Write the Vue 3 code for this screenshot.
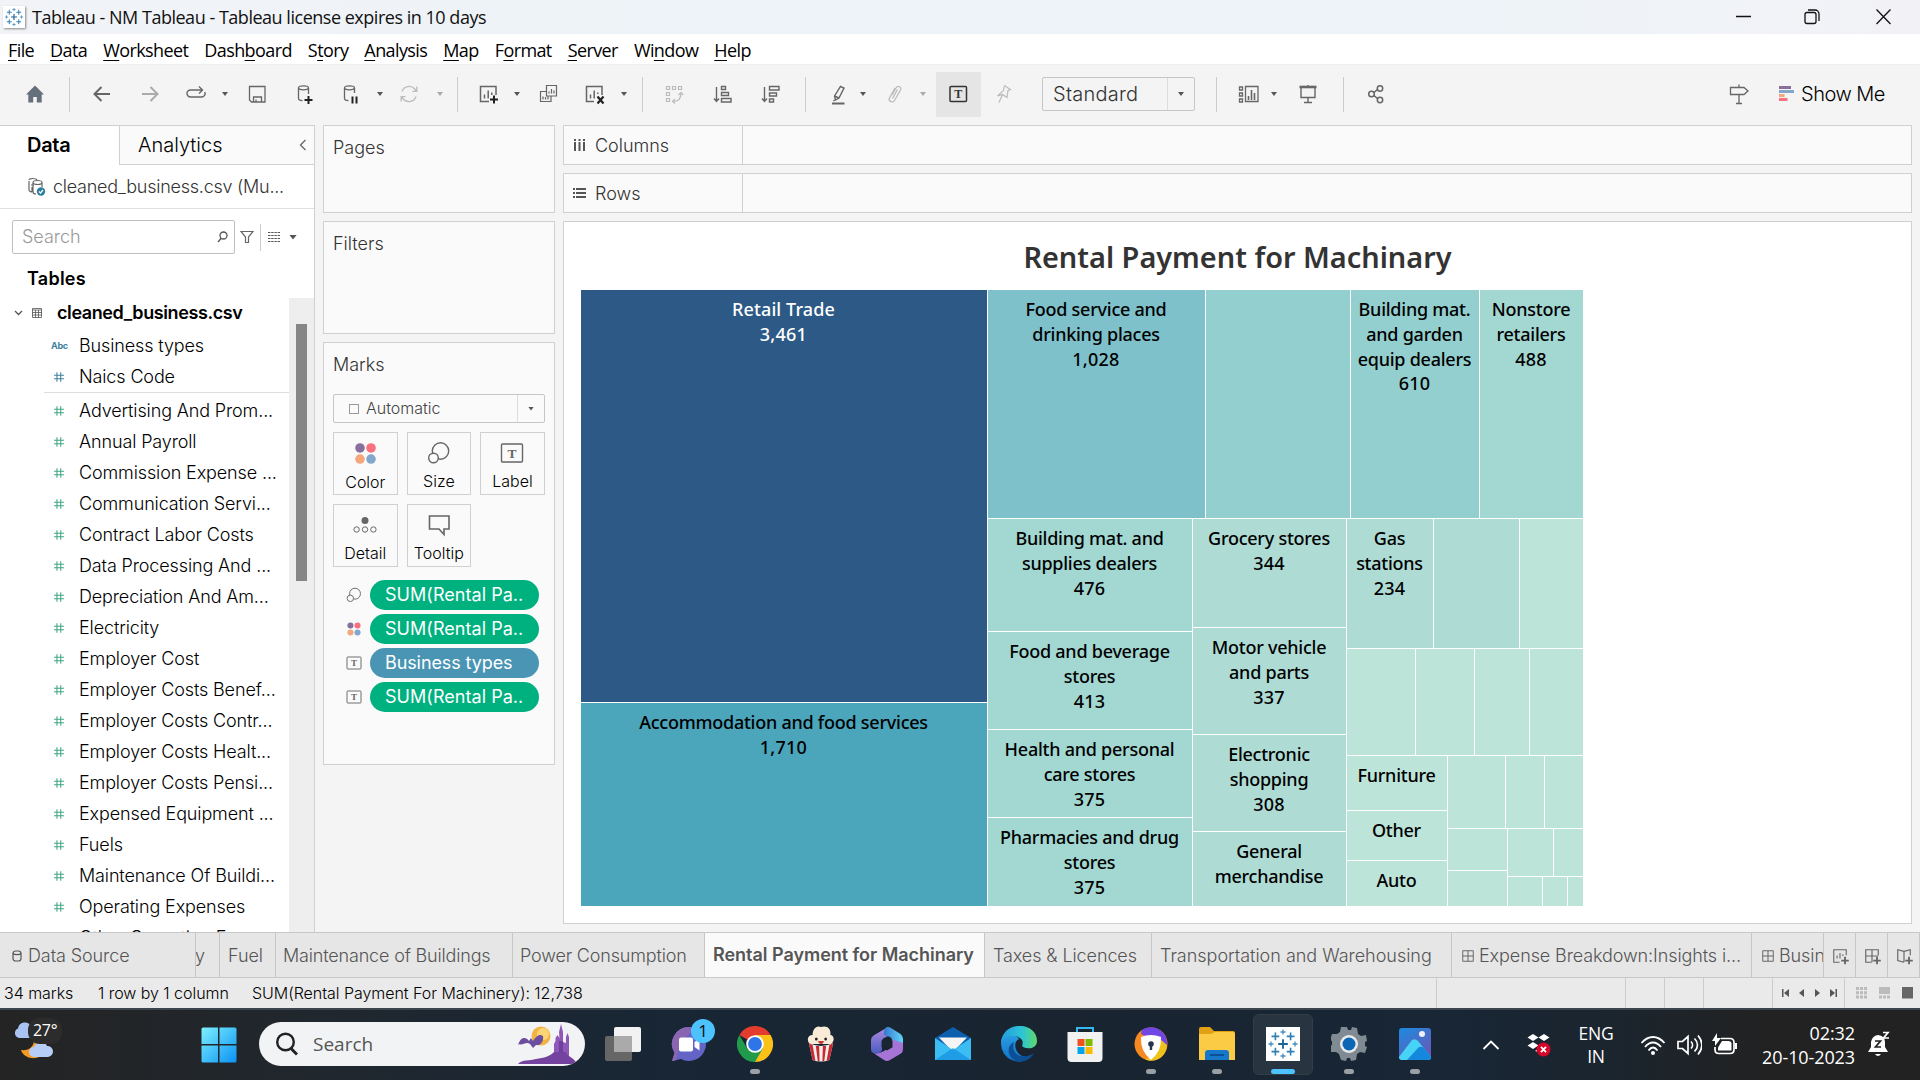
<script setup>
import { h } from 'vue'

/* ---------- icon drawings (stroke icons share a 24px box) ---------- */
const T = (x, y, s, c = '#555') => `<text x="${x}" y="${y}" font-family="Liberation Serif, serif" font-weight="700" font-size="${s}" fill="${c}" stroke="none" text-anchor="middle">T</text>`
const cross = (x, y, r, c, w) => `<path d="M${x - r} ${y}h${2 * r}M${x} ${y - r}v${2 * r}" stroke="${c}" stroke-width="${w}"/>`
const tableau = [
  cross(12, 12, 3.6, '#1f6391', 1.4),
  ...[[6.3, 6.3], [17.7, 6.3], [6.3, 17.7], [17.7, 17.7]].map(([x, y]) => cross(x, y, 2.9, '#2f7fb5', 1.2)),
  ...[[12, 3], [12, 21], [3, 12], [21, 12]].map(([x, y]) => cross(x, y, 1.9, '#4a90bd', 1)),
].join('')
const dots = '<g><circle cx="6.7" cy="6.7" r="4.6" fill="#87719c"/><circle cx="17.3" cy="6.7" r="4.6" fill="#f9717f"/><circle cx="6.7" cy="17.3" r="4.6" fill="#f4a77d"/><circle cx="17.3" cy="17.3" r="4.6" fill="#83a6cc"/></g>'
const icons = {
  tableau,
  dots,
  home: '<path d="M12 3.5 3 12.5h2.3V20.500h4.900v-5.500h3.600v5.500h4.900V12.500H21Z" fill="#66707c" stroke="none"/>',
  back: '<path d="M20 12H5M11.500 5 4.500 12l7 7" stroke-width="2"/>',
  forward: '<path d="M4 12h15M12.500 5l7 7-7 7" stroke="#aaa" stroke-width="2"/>',
  redo: '<path d="M18 8H6.500a3.500 3.500 0 0 0-3.500 3.500a3.500 3.500 0 0 0 3.500 3.500h11a3.500 3.500 0 0 0 3.300-5M15 4.500 18.500 8l-3.500 3.500" stroke-width="1.400"/>',
  save: '<path d="M4.500 4.500h15.500v15.500H6.500l-2-2ZM8.500 20v-5h8v5M11 20v-2.500" stroke-width="1.300"/>',
  dbadd: `<path d="M6.500 6v10.500c0 1 1.500 2 4 2.200M16.500 6v6" stroke-width="1.300"/><ellipse cx="11.500" cy="5.800" rx="5" ry="2" stroke-width="1.300"/><path d="M16.500 14v8M12.500 18h8" stroke="#222" stroke-width="2"/>`,
  dbpause: '<path d="M6.500 6v10.500c0 1 1.500 2 4 2.200M16.500 6v5" stroke-width="1.300"/><ellipse cx="11.500" cy="5.800" rx="5" ry="2" stroke-width="1.300"/><path d="M14.500 14.500v7M18.500 14.500v7" stroke="#222" stroke-width="2"/>',
  refresh: '<path d="M5 9.500A7.500 7.500 0 0 1 17.500 6.700L19.500 9M19 14.500A7.500 7.500 0 0 1 6.500 17.300L4.500 15M19.800 4.500V9.300H15.500M4.200 19.500v-4.800h4.300" stroke="#bbb" stroke-width="1.300"/>',
  chartadd: `<path d="M13 19.500H4.500v-15H20V13M8.500 16.500v-4M12.200 16.500V8.500M15.800 13V10.500" stroke-width="1.500"/><path d="M18 13.500v8M14 17.500h8" stroke="#222" stroke-width="2"/>`,
  duplicate: '<path d="M10.500 3.500h10v10.500h-10ZM10.500 9.500h-6v10h10.500v-5.500M13 11.500v-2M15.500 11.500V7M18 11.500V8.500M7 17.500v-3M9.500 17.500v-2.500M12 17.500v-3" stroke-width="1.200"/>',
  chartclear: '<path d="M12 19.500H4.500v-15H20V13M8.500 16.500v-4M12.200 16.500V8.500M15.800 12V10.500" stroke-width="1.500"/><path d="M15.500 14.500l6 7M21.500 14.500l-6 7" stroke="#222" stroke-width="2.200"/>',
  swap: '<g stroke="#bbb" stroke-width="1.200"><path d="M4.500 4.500h3v3h-3ZM10.500 4.500h3v3h-3ZM16.500 4.500h3v3h-3ZM4.500 10.500h3v3h-3ZM4.500 16.500h3v3h-3ZM11 19.500c5 0 8-3 8-8.500M16.500 13 19 10.500l2.300 2.500M13 17l-2.500 2.500L13 21.500"/></g>',
  sortasc: '<path d="M6.500 5v14M4 16.500l2.500 3 2.500-3M11.500 4.500h4v3h-4ZM11.500 10.500h7v3h-7ZM11.500 16.500h9.500v3.500h-9.500Z" stroke-width="1.400"/>',
  sortdesc: '<path d="M6.500 5v14M4 16.500l2.500 3 2.500-3M11.500 4.500h9.500v3.500h-9.500ZM11.500 11h7v3h-7ZM11.500 17h4v3h-4Z" stroke-width="1.400"/>',
  pen: '<path d="M14.500 4.500l3.500 1.500-5 10-3.500 2-1-4ZM8.500 14l4.500 2M8.500 18l-1 1" stroke-width="1.400"/><path d="M6 21.500h12.500" stroke-width="2"/>',
  clip: '<path d="M9 13l4-7c2-3 6-1 4.500 2l-6 10.500c-2 3-6.500.5-5-2.500L12 6M9.500 16.500l5-9" stroke="#bbb" stroke-width="1.300"/>',
  label: '<rect x="4" y="4.500" width="16.500" height="15" rx="1" stroke="#333" stroke-width="1.500"/>' + T(12.2, 16, 12, '#333'),
  pin: '<path d="M13.500 3.500l6 4-2.500 1-1 7-4.500-3-5 1.500M11.500 12.500 8 20.500M13.500 3.500l-1 5-6 5.500" stroke="#bbb" stroke-width="1.200"/>',
  cards: '<path d="M3.500 5h3v3h-3ZM3.500 11h3v3h-3ZM3.500 17h3v3h-3ZM9.500 4.500H22V19.500H9.500Z" stroke-width="1.300"/><path d="M12.500 18v-4M15.500 18V8M18.500 18v-7" stroke-width="1.600"/>',
  present: '<path d="M3.500 5h17" stroke-width="2.600"/><path d="M5 6v9.500h14V6M12 3v1M12 15.500v5M8 20.500h8" stroke-width="1.400"/>',
  share: '<path d="M10 10.500l4-3.500M10 13.500l4 3.500" stroke-width="1.500"/><circle cx="7.500" cy="12" r="2.800" stroke-width="1.500"/><circle cx="16" cy="6.500" r="2.700" stroke-width="1.500"/><circle cx="16" cy="18" r="2.700" stroke-width="1.500"/>',
  sign: '<path d="M3.500 5.500h13.500l4 3.500-4 3.500H3.500ZM12 2.500v3M12 12.500v9M9 21.500h6" stroke-width="1.300"/>',
  size: '<circle cx="13.500" cy="10" r="8.200" stroke-width="1.400"/><circle cx="6.500" cy="17" r="4.800" fill="#fafafa" stroke-width="1.400"/>',
  text: '<rect x="1.500" y="3" width="21" height="18" rx="1" stroke-width="1.400"/>' + T(12, 17, 13.5, '#666'),
  detail: '<circle cx="12" cy="7.500" r="3.500" fill="#666" stroke="none"/><circle cx="3.600" cy="16.500" r="2.700"/><circle cx="12" cy="16.500" r="2.700"/><circle cx="20.400" cy="16.500" r="2.700"/>',
  tooltip: '<path d="M2.500 3h19.500v13h-5v5.500l-5-5.500H2.500Z" stroke-width="1.600"/>',
  numblue: '<path d="M8.500 4v16M15 4v16M3.500 9h17M3.500 15h17" stroke="#3f7f9f" stroke-width="1.800"/>',
  numgreen: '<path d="M8.500 4v16M15 4v16M3.500 9h17M3.500 15h17" stroke="#3fa585" stroke-width="1.800"/>',
  dash: '<path d="M3 3h18v18H3ZM12 3v18M3 12h18" stroke-width="1.700"/>',
  newsheet: `<path d="M11.500 19.500H4.500v-15H19.500V11M8.500 15v-3.500M12 15V8.500M15.500 12v-2" stroke-width="1.300"/><path d="M18 13v9M13.500 17.500h9" stroke-width="2.200"/>`,
  newdash: `<path d="M11.500 19.500H4.500v-15H19.500V11M12 4.500v15M4.500 12h15" stroke-width="1.400"/><path d="M18 13v9M13.500 17.500h9" stroke-width="2.200"/>`,
  newstory: `<path d="M12 6.500 4.500 4.500v13l7.500 2M12 6.500l7.500-2V11M12 6.500v13" stroke-width="1.400"/><path d="M18 13v9M13.500 17.500h9" stroke-width="2.200"/>`,
}
const Icon = (p) => h('svg', { class: 'icon', viewBox: '0 0 24 24', width: p.size || 24, height: p.size || 24, fill: 'none', stroke: p.name === 'dots' ? 'none' : '#666', innerHTML: icons[p.name] })
Icon.props = ['name', 'size']

const menus = [['', 'F', 'ile'], ['', 'D', 'ata'], ['', 'W', 'orksheet'], ['Dash', 'b', 'oard'], ['S', 't', 'ory'], ['', 'A', 'nalysis'], ['', 'M', 'ap'], ['F', 'o', 'rmat'], ['', 'S', 'erver'], ['Wi', 'n', 'dow'], ['', 'H', 'elp']]

/* toolbar entries: kind and horizontal centre; margins are derived so the row stays in flow */
const widths = { sep: 1, caret: 6, select: 153, label: 45 }
const toolbar = (() => {
  let end = 0
  return [['home', 35], ['sep', 69], ['back', 102], ['forward', 150], ['redo', 196], ['caret', 225], ['save', 257], ['dbadd', 304], ['dbpause', 350], ['caret', 380], ['refresh', 409], ['caretoff', 440], ['sep', 457], ['chartadd', 488], ['caret', 517], ['duplicate', 548], ['chartclear', 594], ['caret', 624], ['sep', 642], ['swap', 674], ['sortasc', 722], ['sortdesc', 770], ['sep', 805], ['pen', 838], ['caret', 863], ['clip', 895], ['caretoff', 923], ['label', 958.5], ['pin', 1003], ['select', 1118.5], ['sep', 1216], ['cards', 1248], ['caret', 1274], ['present', 1308], ['sep', 1343], ['share', 1376], ['sign', 1739]].map(([kind, c]) => {
    const w = kind === 'caretoff' ? 6 : widths[kind] || 24
    const ml = c - w / 2 - end
    end = c + w / 2
    return { kind, ml }
  })
})()

const fields = ['Advertising And Prom...', 'Annual Payroll', 'Commission Expense ...', 'Communication Servi...', 'Contract Labor Costs', 'Data Processing And ...', 'Depreciation And Am...', 'Electricity', 'Employer Cost', 'Employer Costs Benef...', 'Employer Costs Contr...', 'Employer Costs Healt...', 'Employer Costs Pensi...', 'Expensed Equipment ...', 'Fuels', 'Maintenance Of Buildi...', 'Operating Expenses', 'Other Operating Ex...']
const markButtons = [['dots', 'Color', 25], ['size', 'Size', 24], ['text', 'Label', 24], ['detail', 'Detail', 24], ['tooltip', 'Tooltip', 24]]
const pills = [['size', 'SUM(Rental Pa..', 'green'], ['dots', 'SUM(Rental Pa..', 'green'], ['text', 'Business types', 'blue'], ['text', 'SUM(Rental Pa..', 'green']]

/* treemap: [size, colour, lines] for leaves, [size, 'row'|'col', children] for groups */
const c3 = '#94cfcf', c4 = '#a2d7d2', c5 = '#aedcd5', c6 = '#bce4d9'
const tree = ['row', [
  [406, 'col', [[412, '#2c5985', ['Retail Trade', '3,461'], 'light'], [203, '#4ba5bb', ['Accommodation and food services', '1,710']]]],
  [595, 'col', [
    [228, 'row', [[217, '#7ec1cb', ['Food service and', 'drinking places', '1,028']], [144, c3, []], [128, c3, ['Building mat.', 'and garden', 'equip dealers', '610']], [103, c4, ['Nonstore', 'retailers', '488']]]],
    [387, 'row', [
      [204, 'col', [[112, c4, ['Building mat. and', 'supplies dealers', '476']], [97, c4, ['Food and beverage', 'stores', '413']], [87, c4, ['Health and personal', 'care stores', '375']], [88, c4, ['Pharmacies and drug', 'stores', '375']]]],
      [153, 'col', [[108, c5, ['Grocery stores', '344']], [106, c5, ['Motor vehicle', 'and parts', '337']], [96, c5, ['Electronic', 'shopping', '308']], [74, c5, ['General', 'merchandise']]]],
      [236, 'col', [
        [129, 'row', [[86, c5, ['Gas', 'stations', '234']], [85, c5, []], [63, c6, []]]],
        [106, 'row', [[68, c6, []], [58, c6, []], [54, c6, []], [53, c6, []]]],
        [150, 'row', [
          [100, 'col', [[54, c6, ['Furniture']], [49, c6, ['Other']], [45, c6, ['Auto']]]],
          [135, 'col', [
            [72, 'row', [[57, c6, []], [38, c6, []], [38, c6, []]]],
            [77, 'row', [
              [59, 'col', [[41, c6, []], [35, c6, []]]],
              [75, 'col', [[47, 'row', [[45, c6, []], [29, c6, []]]], [29, 'row', [[34, c6, []], [24, c6, []], [15, c6, []]]]]],
            ]],
          ]],
        ]],
      ]],
    ]],
  ]],
]]
const Tile = ({ node }) => {
  const [size, kind, kids, tone] = node
  const flex = `0 0 ${size}px`
  if (kind === 'row' || kind === 'col') return h('div', { class: ['tm-group', kind], style: { flex } }, kids.map((n) => h(Tile, { node: n })))
  return h('div', { class: ['tm-tile', tone], style: { flex, background: kind } }, kids.map((t) => h('div', { class: { num: /^\d/.test(t) } }, t)))
}
Tile.props = ['node']

const tabs = [['y', 24, 'cut'], ['Fuel', 56], ['Maintenance of Buildings', 237, 'tight'], ['Power Consumption', 192, 'tight'], ['Rental Payment for Machinary', 280, 'active'], ['Taxes & Licences', 167], ['Transportation and Warehousing', 300, 'wide'], ['Expense Breakdown:Insights i...', 300, 'dashed'], ['Busin', 72, 'dashed']]
</script>

<template>
  <div class="screen">
    <header class="titlebar">
      <span class="app-icon"><Icon name="tableau" :size="20" /></span>
      <span class="title-text">Tableau - NM Tableau - Tableau license expires in 10 days</span>
      <svg class="win" width="200" height="34" viewBox="0 0 200 34" fill="none" stroke="#111" stroke-width="1.300">
        <path d="M16 16.500h15M156.500 9.500l14 14.500M170.500 9.500l-14 14.500" />
        <rect x="85" y="12.500" width="11" height="11" rx="2" /><path d="M88 10h7a4 4 0 0 1 4 4v7" />
      </svg>
    </header>
    <nav class="menubar"><span v-for="m in menus" :key="m[2]">{{ m[0] }}<u>{{ m[1] }}</u>{{ m[2] }}</span></nav>

    <div class="toolbar">
      <template v-for="(t, i) in toolbar" :key="i">
        <div v-if="t.kind === 'select'" class="select" :style="{ marginLeft: t.ml + 'px' }"><span>Standard</span><b><i class="caret"></i></b></div>
        <i v-else-if="t.kind.startsWith('caret')" :class="['caret', { off: t.kind === 'caretoff' }]" :style="{ marginLeft: t.ml + 'px' }"></i>
        <i v-else-if="t.kind === 'sep'" class="sep" :style="{ marginLeft: t.ml + 'px' }"></i>
        <span v-else :class="['tool', { pressed: t.kind === 'label' }]" :style="{ marginLeft: t.ml + 'px' }"><Icon :name="t.kind" /></span>
      </template>
      <svg class="showme-icon" width="15" height="16" viewBox="0 0 15 16"><path fill="#87719c" d="M0 0h12v3H0z" /><path fill="#83a6cc" d="M0 4h15v3H0z" /><path fill="#f4a77d" d="M0 8h5.500v3H0z" /><path fill="#f9717f" d="M0 12h8.500v3H0z" /></svg>
      <span class="showme">Show Me</span>
    </div>

    <main class="work">
      <aside class="data">
        <div class="data-tabs"><b>Data</b><span>Analytics<svg width="8" height="12" viewBox="0 0 8 12" fill="none" stroke="#666" stroke-width="1.300"><path d="M6.500 1 1.500 6l5 5" /></svg></span></div>
        <div class="source">
          <svg width="19" height="20" viewBox="0 0 19 20" fill="none" stroke="#666" stroke-width="1.200"><path d="M2 4v9c0 1 2 2 3 2M4 8h3M5 10v5M10 3c-1-2-8-2-8 0M6 6v9c0 1.500 2 2 3 2M15 6v4" /><ellipse cx="10.500" cy="5.500" rx="4.500" ry="2" /><circle cx="14" cy="14.500" r="4.200" fill="#2f7e9e" stroke="none" /><path d="M12 14.500l1.500 1.500 2.500-3" stroke="#fff" /></svg>
          <span>cleaned_business.csv (Mu...</span>
        </div>
        <div class="search-row">
          <div class="search"><span>Search</span><svg width="11" height="12" viewBox="0 0 11 12" fill="none" stroke="#555" stroke-width="1.300"><circle cx="6.500" cy="4.500" r="3.500" /><path d="M4.200 7.300 1 11" /></svg></div>
          <svg width="14" height="14" viewBox="0 0 14 14" fill="none" stroke="#666" stroke-width="1.200"><path d="M1 1.500h12L8.500 7v5.500h-3V7Z" /></svg>
          <i class="vline"></i>
          <svg class="grid-ic" width="12" height="10" viewBox="0 0 12 10" stroke="#555" stroke-width="1.200" stroke-dasharray="2.400 .8"><path d="M0 .5h12M0 3.500h12M0 6.500h12M0 9.500h12" /></svg>
          <i class="caret big"></i>
        </div>
        <h3>Tables</h3>
        <div class="tree">
          <div class="rows">
            <div class="row table">
              <svg width="9" height="6" viewBox="0 0 9 6" fill="none" stroke="#555" stroke-width="1.300"><path d="M1 1l3.500 3.500L8 1" /></svg>
              <svg width="10" height="10" viewBox="0 0 10 10" fill="none" stroke="#555"><path d="M.5.500h9v9h-9ZM0 2h10M0 4.500h10M0 7h10M3.500 2v8M6.500 2v8" stroke-width=".8" /></svg>
              <b>cleaned_business.csv</b>
            </div>
            <div class="row"><small>Abc</small><span>Business types</span></div>
            <div class="row"><em><Icon name="numblue" :size="14" /></em><span>Naics Code</span></div>
            <hr />
            <div v-for="f in fields" :key="f" class="row"><em><Icon name="numgreen" :size="14" /></em><span>{{ f }}</span></div>
          </div>
          <div class="scroll"><i></i></div>
        </div>
      </aside>

      <section class="cards">
        <div class="card pages">Pages</div>
        <div class="card filters">Filters</div>
        <div class="card marks">Marks
          <div class="mark-type"><i class="square"></i><span>Automatic</span><b><i class="caret"></i></b></div>
          <div class="mark-buttons">
            <div v-for="m in markButtons" :key="m[1]"><Icon :name="m[0]" :size="m[2]" /><span>{{ m[1] }}</span></div>
          </div>
          <div v-for="(p, i) in pills" :key="i" class="pill-row"><Icon :name="p[0]" :size="16" /><span :class="['pill', p[2]]">{{ p[1] }}</span></div>
        </div>
      </section>

      <section class="sheet">
        <div class="shelf"><div><svg width="13" height="13" viewBox="0 0 13 13" fill="#555"><path d="M1 0h2v2H1zM5.500 0h2v2h-2zM10 0h2v2h-2zM1 3h2v9H1zM5.500 3h2v9h-2zM10 3h2v9h-2z" /></svg><span>Columns</span></div></div>
        <div class="shelf"><div><svg width="13" height="13" viewBox="0 0 13 13" fill="#555"><path d="M0 1h2v2H0zM0 5h2v2H0zM0 9h2v2H0zM3 1h10v2H3zM3 5h10v2H3zM3 9h10v2H3z" /></svg><span>Rows</span></div></div>
        <div class="view">
          <h1>Rental Payment for Machinary</h1>
          <div class="treemap"><Tile v-for="(n, i) in tree[1]" :key="i" :node="n" /></div>
        </div>
      </section>
    </main>

    <div class="tabs">
      <div class="tab ds"><svg width="10" height="12" viewBox="0 0 10 12" fill="none" stroke="#555" stroke-width="1.200"><rect x="1" y="1" width="8" height="10" rx="2.500" /><path d="M1 3.500c1.500 1.500 6.500 1.500 8 0" /></svg>Data Source</div>
      <div v-for="t in tabs" :key="t[0]" :class="['tab', t[2]]" :style="{ width: t[1] + 'px' }"><Icon v-if="t[2] === 'dashed'" name="dash" :size="14" />{{ t[0] }}</div>
      <div class="tab new"><Icon name="newsheet" :size="20" /></div>
      <div class="tab new"><Icon name="newdash" :size="20" /></div>
      <div class="tab new"><Icon name="newstory" :size="20" /></div>
    </div>
    <div class="status">
      <span class="s1">34 marks</span><span class="s2">1 row by 1 column</span><span class="s3">SUM(Rental Payment For Machinery): 12,738</span>
      <i class="d1"></i><i class="d2"></i><i class="d3"></i><i class="d4"></i>
      <div class="pager"><svg width="60" height="10" viewBox="0 0 60 10" fill="#555"><path d="M0 1h1.500v8H0zM7 1v8L2 5zM22 1v8l-5-4zM33 1v8l5-4zM48 1v8l5-4zM53.500 1H55v8h-1.500z" /></svg></div>
      <svg class="modes" width="62" height="12" viewBox="0 0 62 12" fill="#bbb"><path d="M0 0h3v3H0zM4 0h3v3H4zM8 0h3v3H8zM0 4.300h3v3H0zM4 4.300h3v3H4zM8 4.300h3v3H8zM0 8.600h3v3H0zM4 8.600h3v3H4zM8 8.600h3v3H8zM23 0h11v7H23zM23 8.600h3v3h-3zM27 8.600h3v3h-3zM31 8.600h3v3h-3z" /><path fill="#666" d="M46 0h11v11.500H46z" /></svg>
    </div>

    <footer class="taskbar">
      <div class="weather">
        <svg width="50" height="44" viewBox="0 0 50 44"><path d="M5 17a5 5 0 0 1-1-9.500A7 7 0 0 1 17 5a6 6 0 0 1 3 12Z" fill="#a9c4f0" /><path d="M20 20c10-3 15 3 11 11-5 9-21 8-24-2 8 1 12-3 13-9Z" fill="#f59a23" /><path d="M20 36a5 5 0 0 1 0-10 7 7 0 0 1 13-1 5.500 5.500 0 0 1 1 11Z" fill="#b6cdf5" /></svg>
        <span>27°</span>
      </div>
      <svg class="start" width="36" height="36" viewBox="0 0 36 36"><defs><linearGradient id="w" x1="0" y1="0" x2="1" y2="1" gradientUnits="objectBoundingBox"><stop offset="0" stop-color="#7df0fd" /><stop offset="1" stop-color="#0b92f5" /></linearGradient></defs><path fill="url(#w)" d="M2 .500h15v16.500H.500V2Q.500.500 2 .500ZM18.500.500H34q1.500 0 1.500 1.500v15h-17ZM.500 18.500H17v17H2q-1.500 0-1.500-1.500ZM18.500 18.500h17V34q0 1.500-1.500 1.500H18.500Z" /></svg>
      <div class="find">
        <svg width="23" height="24" viewBox="0 0 23 24" fill="none" stroke="#222" stroke-width="2.400"><circle cx="10.500" cy="10" r="8.300" /><path d="M16 16.500l6 6" stroke-width="3" /></svg>
        <span>Search</span>
        <svg class="castle" width="60" height="40" viewBox="0 0 60 40"><circle cx="24" cy="12" r="9.500" fill="#f3b244" /><circle cx="26" cy="10" r="6" fill="#fbd474" /><path d="M1 21C4 12 9 13 12 17l2-3 2 3c4-6 7-7 10-5 1 6-3 10-7 9l-3 3-3-4c-4-3-7 2-12 0Z" fill="#6b4f9e" /><path d="M37 33V20l1.500-3V14l2-3 2 3-.5-6L44 0l2 8v10l3 1v-6l1.500-4 1.500 4v21Z" fill="#8e57b8" /><path d="M42 17v16h4V17Z" fill="#6f3f9e" /><path d="M1 40c4-5 12-3 18-5 8-1 14-3 18-7h12c0 4 9 6 11 12Z" fill="#74429f" /></svg>
      </div>
      <div class="apps">
        <div><svg width="36" height="36" viewBox="0 0 36 36"><rect x="0" y="10" width="27" height="25" rx="2" fill="#666" /><rect x="9" y="1" width="27" height="25" rx="2" fill="#f2f2f2" /><path d="M9 10h18v16H9Z" fill="#aaa" /></svg></div>
        <div class="chat"><svg width="36" height="36" viewBox="0 0 36 36"><path d="M18 1a17 17 0 1 1-8 32L1 35l2.500-8A17 17 0 0 1 18 1Z" fill="#6463c6" /><path d="M18 1A17 17 0 0 0 3.500 27L1 35l4-.8C8 20 14 8 26 3A17 17 0 0 0 18 1Z" fill="#8a66b2" /><rect x="8" y="11.500" width="14" height="14" rx="2" fill="#fff" /><path d="M23.500 16l5-3.500v12l-5-3.500Z" fill="#fff" /></svg><i>1</i></div>
        <div class="on"><svg width="36" height="36" viewBox="0 0 36 36"><path d="M18 18 2.400 9A18 18 0 0 1 33.600 9Z" fill="#e33b2e" /><path d="M18 18 18 9h15.600A18 18 0 0 1 18 36Z" fill="#fbc116" /><path d="M18 18l7.800 4.500L18 36A18 18 0 0 1 2.400 9l7.800 13.500Z" fill="#219a4b" /><circle cx="18" cy="18" r="8.800" fill="#fff" /><circle cx="18" cy="18" r="6.900" fill="#2f75e8" /></svg></div>
        <div><svg width="28" height="36" viewBox="0 0 30 36" preserveAspectRatio="none"><path d="M3 18c-4-4-2-9 3-9C6 3 10-1 15 1c7-2 11 2 10 8 4 0 5 6 1 9Z" fill="#f8ecd9" /><circle cx="10" cy="13" r="1.500" fill="#222" /><circle cx="20" cy="13" r="1.500" fill="#222" /><path d="M12 15h6c0 4-6 4-6 0Z" fill="#c33" /><path d="M2 17l4 17q9 3 18 0l4-17q-13 6-26 0Z" fill="#f5eee8" /><path d="M2 17l4 17 3 .8L6 19ZM9.500 20l2 15h2l-.5-15ZM17 20l-.5 15h2l2-15ZM24 19l-3 15.800 3-.8 4-17Z" fill="#c62b34" /></svg></div>
        <div><svg width="34" height="36" viewBox="0 0 34 36"><defs><linearGradient id="m1" x2="0" y2="1"><stop offset="0" stop-color="#b08be0" /><stop offset="1" stop-color="#4a5cc0" /></linearGradient><linearGradient id="m2"><stop offset="0" stop-color="#3576cf" /><stop offset="1" stop-color="#62d6f7" /></linearGradient></defs><path d="M18 1 3.500 9.500Q1 11 1 14v9q0 4 4 4.500 7 0 7-4.500v-8q0-2 2-3l6-3Z" fill="url(#m1)" /><path d="M17 1q2-.5 4 1l9.500 6Q33 10 33 13v10l-11-6v-3q0-2-2-3l-6-2Q13 3 17 1Z" fill="url(#m2)" /><path d="M33 17v6q0 3-2 4.500L20 34q-3 2-6 0L4 27.500q5 .5 9-2l7-4q3-2 2-8Z" fill="#a673d6" /><path d="M17 11.500l5.500 3.200v6.600L17 24.500l-5.500-3.200v-6.600Z" fill="#192530" /></svg></div>
        <div><svg width="36" height="36" viewBox="0 0 36 36"><path d="M0 12 18 1l18 11v10H0Z" fill="#0c5fae" /><path d="M4 11.500h28L20 24h-4Z" fill="#f5f5f5" /><path d="M0 12v22h36V12L18 24Z" fill="#3bbdf3" /><path d="M0 34 18 22l18 12Z" fill="#1591e0" opacity=".75" /></svg></div>
        <div><svg width="36" height="36" viewBox="0 0 36 36"><defs><linearGradient id="e"><stop offset="0" stop-color="#259be0" /><stop offset=".6" stop-color="#2dc6d3" /><stop offset="1" stop-color="#61d76a" /></linearGradient><linearGradient id="e2" x2="0" y2="1"><stop offset="0" stop-color="#2a9fe4" /><stop offset="1" stop-color="#1272c8" /></linearGradient></defs><path d="M0 18C0 5 14 6 18 13c-8 4-3 20 12 18A18 18 0 0 1 0 18Z" fill="url(#e2)" /><path d="M0 17C1-6 36-5 36 15c0 7-8 9-14 6-2-2 1-3-1-7C17 8 4 8 0 17Z" fill="url(#e)" /><path d="M13 16c-4 14 10 18 20 11-4 7-12 10-18 8C5 30 6 19 13 16Z" fill="#0b5097" /></svg></div>
        <div><svg width="36" height="36" viewBox="0 0 36 36"><path d="M10 7V2h16v5" fill="none" stroke="#35b7ef" stroke-width="2" /><path d="M.500 6h35v26q0 4-4 4h-27q-4 0-4-4Z" fill="#f1f1f1" /><path d="M10.500 13h7v7h-7z" fill="#f05022" /><path d="M18.500 13h7v7h-7z" fill="#7fb900" /><path d="M10.500 21h7v7h-7z" fill="#00a3ee" /><path d="M18.500 21h7v7h-7z" fill="#feb800" /></svg></div>
        <div class="on"><svg width="34" height="36" viewBox="0 0 34 36"><circle cx="17" cy="18" r="16.500" fill="#f6891f" /><path d="M8 4C20-4 35 6 33 20L25 12Q14 12 7 8Z" fill="#7046e4" /><path d="M33 19c-1 16-17 18-22 14 8-2 15-9 16-19Z" fill="#eec21c" /><path d="M7 11q10-4 20 0 1 14-10 23Q6 25 7 11Z" fill="#fff" /><circle cx="17" cy="18" r="2.800" fill="#27364e" /><path d="M15.800 19h2.400v5h-2.400z" fill="#27364e" /></svg></div>
        <div class="on"><svg width="36" height="34" viewBox="0 0 36 34"><path d="M0 2q0-2 2-2h9l4 4h19q2 0 2 2v5H0Z" fill="#e2a014" /><path d="M0 7h12l4-2h18q2 0 2 2v26H0Z" fill="#fccb45" /><path d="M6 33v-7q0-3 3-3h18q3 0 3 3v7Z" fill="#1578cb" /><path d="M11 28h14" stroke="#0c4f92" stroke-width="2" /></svg></div>
        <div class="current"><span><Icon name="tableau" :size="32" /></span></div>
        <div class="on"><svg width="36" height="36" viewBox="0 0 36 36"><path d="M13 1h3l1 3h3l1-3 5 1 1 6 3 2 5-1 1 6-2 1v4l2 1-2 6-5-1-3 2-1 6-5 1-1-3h-3l-1 3-5-1-2-6-3-2-5 0-1-6 2-1v-4l-2-1 2-6 5 0 3-2 1-5Z" fill="#808a93" /><circle cx="18" cy="18" r="9" fill="#e8eaec" /><circle cx="18" cy="18" r="6.500" fill="#0b66b6" /></svg></div>
        <div class="on"><svg width="32" height="32" viewBox="0 0 32 32"><defs><linearGradient id="p" x2=".7" y2="1"><stop offset="0" stop-color="#1a8be0" /><stop offset="1" stop-color="#6a59b8" /></linearGradient></defs><rect width="32" height="32" rx="3" fill="url(#p)" /><path d="M0 29 13 12q3-2 6 1l13 16q0 3-3 3H3q-3 0-3-3Z" fill="#47d3f6" /><path d="M8 32 20 19q3-1 5 1l7 9q0 3-3 3Z" fill="#1388dc" /><circle cx="23" cy="6" r="3" fill="#f4f0fa" /></svg></div>
      </div>
      <svg class="chev" width="18" height="12" viewBox="0 0 18 12" fill="none" stroke="#fff" stroke-width="1.800"><path d="M1.500 10 9 2.500l7.500 7.500" /></svg>
      <svg class="dropbox" width="24" height="24" viewBox="0 0 24 24"><path fill="#fff" d="M6 1l5.500 3.500L6 8 .500 4.500ZM17 1l5.500 3.500L17 8l-5.500-3.500ZM6 9l5.500 3.500L6 16 .500 12.500ZM8 18l3-2v3Z" /><circle cx="16.500" cy="16.500" r="7" fill="#d5062a" /><path d="M14 13.800l5 5.400M19 13.800l-5 5.400" stroke="#fff" stroke-width="1.800" /></svg>
      <div class="lang">ENG<br />IN</div>
      <svg class="wifi" width="26" height="22" viewBox="0 0 26 22" fill="none" stroke="#fff" stroke-width="1.800"><path d="M1.500 9c7-8 16-8 23 0M5 13c5-6 11-6 16 0M8.500 16.500c3-4 6-4 9 0" /><circle cx="13" cy="19" r="2" fill="#fff" stroke="none" /></svg>
      <svg class="sound" width="25" height="22" viewBox="0 0 25 22" fill="none" stroke="#fff" stroke-width="1.700"><path d="M1 7.500h4.500L11 2.500v17l-5.500-5H1ZM14 7.500c2 2 2 5 0 7M17.500 4.500c4 4 4 9 0 13M21 1.500c5 6 5 13 0 19" /></svg>
      <svg class="batt" width="25" height="24" viewBox="0 0 25 24" fill="none" stroke="#fff" stroke-width="1.700"><path d="M9 5.500h9q4 0 4 4v7q0 4-4 4H7q-4 0-4-4V14" /><path d="M10 8h6q3.500 0 3.500 2.500v7H6v-3Z" fill="#fff" stroke="none" /><path d="M24 10v6" stroke-width="2" /><path d="M5 0 0 8h3v5l6-8H5Z" fill="#fff" stroke="none" /></svg>
      <div class="clock">02:32<br />20-10-2023</div>
      <svg class="bell" width="22" height="28" viewBox="0 0 22 28"><path d="M0 21l3-5V11Q4 5 10 4q7 1 7 7v5l3 5ZM7 23h6q-3 4-6 0Z" fill="#fff" /><path d="M7 10h5.500L7.500 16H13" fill="none" stroke="#222" stroke-width="1.700" /><path d="M15 1.500h5L15.500 7H21" fill="none" stroke="#fff" stroke-width="1.700" /></svg>
    </footer>
  </div>
</template>

<style>
body { margin: 0; overflow: hidden; }
.icon { display: block; flex: none; }
.tm-group { display: flex; gap: 1px; min-width: 0; min-height: 0; }
.tm-group.col { flex-direction: column; }
.tm-tile { box-sizing: border-box; min-width: 0; min-height: 0; overflow: hidden; padding: 7px 1px 0 0; text-align: center; white-space: nowrap; letter-spacing: -.25px; }
.tm-tile .num { letter-spacing: .25px; }
.tm-tile.light { color: #fff; letter-spacing: .1px; }
</style>

<style scoped>
.screen { width: 1920px; height: 1080px; display: flex; flex-direction: column; overflow: hidden; background: #f4f4f4; font: 300 18px/24px Inter, "Noto Sans", sans-serif; color: #333; white-space: nowrap; }
.screen > * { flex: none; }
.screen * { box-sizing: border-box; }
.titlebar { height: 34px; display: flex; align-items: center; background: linear-gradient(90deg, #f1f3f7, #edf3f8 40%, #edf3f8 75%, #f2f2f6); font: 400 18px "Open Sans", sans-serif; color: #111; }
.app-icon { width: 22px; height: 22px; margin-left: 3px; display: flex; align-items: center; justify-content: center; background: #fff; box-shadow: 1px 1px 2px #888; }
.title-text { margin: 0 0 0 7px; letter-spacing: -.48px; }
.win { margin-left: auto; width: 200px; }
.menubar { height: 30px; display: flex; gap: 16px; padding: 2px 0 0 8px; background: #fff; font: 400 18px/28px "Open Sans", sans-serif; color: #000; letter-spacing: -.6px; }
.menubar u { text-underline-offset: 3px; text-decoration-thickness: 1px; }
.toolbar { height: 61px; display: flex; align-items: center; padding-bottom: 2px; border-top: 1px solid #eee; }
.toolbar > * { flex: none; }
.tool { width: 24px; height: 24px; }
.tool.pressed { width: 45px; height: 45px; display: flex; align-items: center; justify-content: center; padding-right: 2px; background: #e5e5e5; }
.caret { display: block; width: 6px; height: 4px; background: #555; clip-path: polygon(0 0, 100% 0, 50% 100%); }
.caret.off { background: #aaa; }
.caret.big { width: 8px; height: 5px; }
.sep { width: 1px; height: 35px; background: #ccc; }
.select { width: 153px; height: 34px; display: flex; border: 1px solid #c6c6c6; border-radius: 2px; font-size: 20px; line-height: 33px; letter-spacing: .25px; }
.select span { flex: 1; padding-left: 10px; }
.select b, .mark-type b { width: 27px; display: flex; align-items: center; justify-content: center; border-left: 1px solid #ddd; }
.showme-icon { margin-left: 28px; }
.showme { margin-left: 7px; font-size: 20px; color: #000; letter-spacing: -.5px; }

.work { height: 807px; display: flex; }
.data { width: 315px; height: 807px; display: flex; flex-direction: column; background: #fff; border: solid #d0d0d0; border-width: 1px 1px 0 0; overflow: hidden; }
.data-tabs { flex: none; height: 39px; display: flex; color: #000; font-size: 20px; line-height: 39px; }
.data-tabs b { width: 119px; padding-left: 27px; font-weight: 600; letter-spacing: -.3px; }
.data-tabs span { flex: 1; display: flex; align-items: center; padding: 0 7px 0 18px; justify-content: space-between; border: solid #d0d0d0; border-width: 0 0 1px 1px; background: #fafafa; }
.source { flex: none; height: 44px; display: flex; align-items: center; gap: 7px; padding: 1px 0 0 27px; border-bottom: 1px solid #e0e0e0; letter-spacing: -.25px; }
.search-row { flex: none; display: flex; align-items: center; padding: 11px 0 0 12px; }
.search { width: 223px; height: 34px; display: flex; align-items: center; justify-content: space-between; padding: 0 6px 0 9px; margin-right: 5px; border: 1px solid #c0c0c0; border-radius: 2px; color: #999; }
.vline { width: 1px; height: 27px; margin: 0 7px 0 6px; background: #ccc; }
.grid-ic { margin-right: 9px; }
h3 { flex: none; margin: 13px 0 7px 27px; font-size: 18px; line-height: 24px; font-weight: 600; color: #000; letter-spacing: .25px; }
.tree { flex: 1; min-height: 0; display: flex; overflow: hidden; }
.rows { width: 289px; color: #000; }
.row { height: 31px; display: flex; align-items: center; padding-left: 44px; }
.row.table { height: 30px; margin-bottom: 2px; padding-left: 14px; gap: 9px; }
.row.table b { margin-left: 6px; font-weight: 600; letter-spacing: -.4px; }
.row em, .row small { width: 30px; flex: none; padding-left: 8px; margin-right: 5px; }
.row small { padding-left: 7px; font: 700 9px Inter, sans-serif; color: #3f7f9f; letter-spacing: -.3px; }
.row:not(.table) span { letter-spacing: -.13px; }
.rows hr { height: 1px; margin: 0 0 2px 44px; border: 0; background: #ddd; }
.scroll { width: 25px; background: #eee; }
.scroll i { display: block; width: 11px; height: 257px; margin: 26px 0 0 7px; background: #868686; }

.cards { width: 232px; margin: 0 8px; display: flex; flex-direction: column; gap: 8px; }
.card { flex: none; padding: 10px 9px 0; border: 1px solid #d0d0d0; background: #fafafa; }
.pages { height: 88px; } .filters { height: 113px; } .marks { height: 423px; }
.mark-type { height: 29px; display: flex; align-items: center; margin-top: 17px; border: 1px solid #c6c6c6; border-radius: 2px; font-size: 16px; color: #444; }
.mark-type span { flex: 1; line-height: 22px; padding-bottom: 1px; }
.mark-type b { height: 100%; }
.square { width: 10px; height: 10px; margin: 0 7px 0 15px; border: 1px solid #999; }
.mark-buttons { display: flex; flex-wrap: wrap; gap: 9px; margin: 9px 0 13px; }
.mark-buttons div { width: 64.600px; height: 63px; display: flex; flex-direction: column; align-items: center; padding-top: 8px; border: 1px solid #d0d0d0; font-size: 16px; color: #000; }
.mark-buttons span { margin-top: 4px; }
.pill-row { height: 30px; display: flex; align-items: center; margin-bottom: 4px; padding-left: 13px; gap: 8px; }
.pill { width: 169px; height: 30px; padding-left: 15px; border-radius: 15px; line-height: 30px; color: #fff; font-weight: 400; letter-spacing: .04px; }
.green { background: #00b180; } .blue { background: #4a95b4; }
.blue { letter-spacing: -.1px; }

.sheet { width: 1349px; display: flex; flex-direction: column; gap: 8px; }
.shelf { flex: none; height: 40px; border: 1px solid #d0d0d0; background: #fafafa; }
.shelf div { width: 179px; height: 38px; display: flex; align-items: center; gap: 9px; padding-left: 9px; border-right: 1px solid #d0d0d0; }
.shelf span { padding-top: 2px; }
.view { height: 703px; border: 1px solid #d0d0d0; background: #fff; }
h1 { height: 68px; margin: 0; text-align: center; font: 600 28.900px/70px "Noto Sans", sans-serif; color: #333; }
.treemap { width: 1002px; height: 616px; margin-left: 17px; display: flex; gap: 1px; font: 500 18px/24.800px "Noto Sans", sans-serif; color: #000; }

.tabs { height: 46px; display: flex; border: solid #c8c8c8; border-width: 1px 0; background: #e6e6e6; color: #555; }
.tab { flex: none; display: flex; align-items: center; overflow: hidden; padding: 1px 0 0 8px; border-right: 1px solid #c6c6c6; letter-spacing: -.1px; }
.tab.ds { width: 196px; padding-left: 12px; gap: 6px; }
.tab.cut { padding-left: 0; text-indent: -1px; }
.tab.tight { padding-left: 7px; letter-spacing: -.17px; }
.tab.wide { letter-spacing: -.02px; }
.tab.active { padding-top: 0; background: #fafafa; font-weight: 600; letter-spacing: -.03px; }
.tab.dashed { gap: 4px; padding-left: 9px; }
.tab.new { width: 32px; padding-left: 6px; }
.status { height: 30px; display: flex; align-items: center; background: #eaeaea; font-size: 16px; color: #000; letter-spacing: -.04px; }
.s1 { width: 94px; padding-left: 4px; } .s2 { width: 158px; padding-left: 4px; } .s3 { width: 1184px; }
.status i { height: 30px; border-left: 1px solid #ccc; }
.d1 { width: 189px; } .d2, .d3 { width: 39px; } .d4 { width: 69px; }
.pager { width: 73px; height: 30px; display: flex; align-items: center; padding-left: 9px; border: solid #ccc; border-width: 0 1px; }
.modes { margin-left: 11px; }

.taskbar { height: 72px; display: flex; align-items: center; border-top: 2px solid #3c454d; background: linear-gradient(90deg, #242424, #20272e 17%, #182635 35%, #192430 55%, #182636 75%, #1b252e 84%, #222 92%, #222); font: 400 18px/29px "Open Sans", sans-serif; color: #fff; }
.taskbar > * { flex: none; }
.weather { width: 64px; margin: -4px 0 0 14px; display: flex; align-items: flex-start; }
.weather span { width: 34px; height: 26px; margin: -3px 0 0 -36px; border-radius: 12px; background: #2c2c2c; font-size: 16px; line-height: 25px; letter-spacing: -.3px; padding-left: 5px; }
.start { margin-left: 123px; margin-top: -1px; }
.find { width: 326px; height: 44px; margin: -2px 5px 0 22px; display: flex; align-items: center; padding-left: 16px; border-radius: 22px; overflow: hidden; background: #f2f3f4; font-size: 19px; color: #555; }
.find span { flex: 1; margin-left: 15px; }
.castle { margin-right: 8px; }
.apps { display: flex; height: 70px; }
.apps > div { width: 66px; height: 67px; display: flex; align-items: center; justify-content: center; position: relative; }
.apps .on::after, .apps .current::after { content: ""; position: absolute; bottom: 3px; width: 10px; height: 5px; border-radius: 3px; background: #9a9fa5; }
.apps .current::before { content: ""; position: absolute; inset: 4px 3px 2px; border-radius: 6px; background: #283440; border: 1px solid #323d48; }
.apps .current span { position: relative; background: #fff; padding: 1px; }
.apps .current::after { width: 24px; background: #4cc2ff; }
.chat i { position: absolute; left: 35px; top: 9px; width: 24px; height: 24px; border-radius: 12px; background: #4cc2ff; color: #111; text-align: center; font: 400 17px/24px "Open Sans", sans-serif; }
.chev { margin-left: 34px; } .dropbox { margin-left: 27px; }
.lang { width: 40px; margin-left: 25px; text-align: center; font-size: 17.500px; line-height: 23px; letter-spacing: -.2px; }
.wifi { margin-left: 24px; } .sound { margin-left: 11px; } .batt { margin-left: 10px; }
.clock { width: 110px; margin-left: 8px; text-align: right; font-size: 18px; line-height: 24px; letter-spacing: -.1px; }
.bell { margin-left: 13px; }
</style>
